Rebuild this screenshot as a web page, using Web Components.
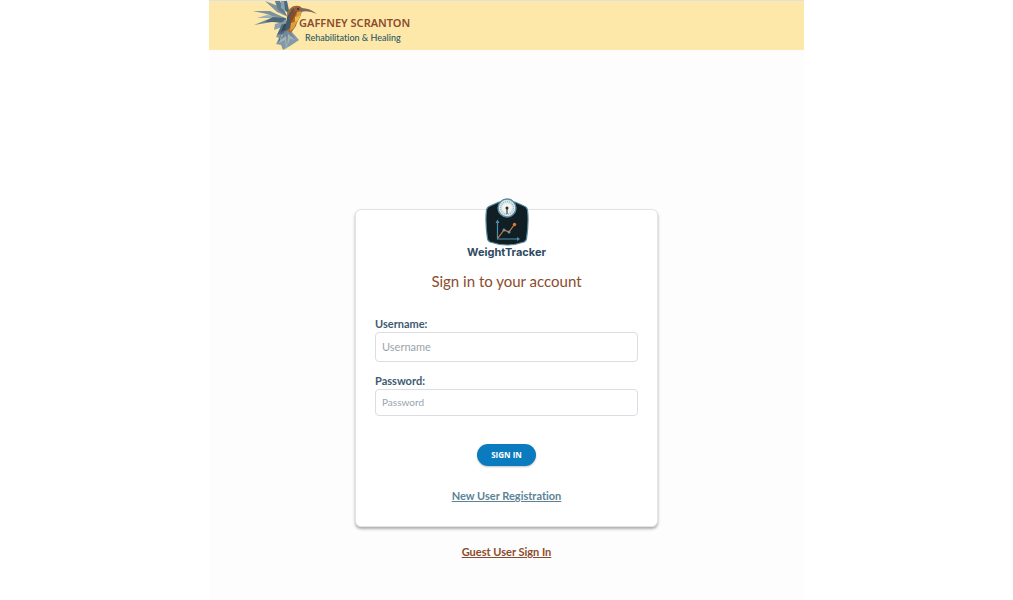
<!DOCTYPE html>
<html lang="en">
<head>
<meta charset="utf-8">
<meta name="viewport" content="width=device-width, initial-scale=1">
<title>WeightTracker - Sign in</title>
<style>
  body { margin: 0; background: #fff; font-family: Lato, "Open Sans", sans-serif; }
</style>
</head>
<body>
<weight-app>
  <brand-header slot="header"></brand-header>
  <sign-in-card>
    <tracker-logo slot="logo"></tracker-logo>
    <form-field label="Username:" placeholder="Username" name="username" type="text"></form-field>
    <form-field label="Password:" placeholder="Password" name="password" type="password" compact></form-field>
    <pill-button slot="action">SIGN IN</pill-button>
    <text-link slot="footer" href="#register">New User Registration</text-link>
  </sign-in-card>
  <text-link class="guest" slot="after" href="#guest" tone="brown">Guest User Sign In</text-link>
</weight-app>
<script>
const define = (name, html, setup) => {
  const template = document.createElement('template');
  template.innerHTML = html;
  customElements.define(name, class extends HTMLElement {
    constructor() {
      super();
      this.attachShadow({ mode: 'open' }).append(template.content.cloneNode(true));
    }
    connectedCallback() { if (setup) setup(this, this.shadowRoot); }
  });
};

define('weight-app', `
<style>
  :host { display: block; box-sizing: border-box; max-width: 595px; min-height: 100vh; margin: 0 auto; background: #fdfdfd; }
  main { display: flex; flex-direction: column; align-items: center; gap: 16px; padding: 159px 16px 32px; }
</style>
<slot name="header"></slot>
<main><slot></slot><slot name="after"></slot></main>`);

define('brand-header', `
<style>
  :host { display: block; }
  header { box-sizing: border-box; height: 50px; padding-left: 44px; display: flex; background: #fde8a9; border-top: 1px solid #e0e0de; }
  svg { flex: none; width: 66px; height: 49px; }
  .name { display: flex; flex-direction: column; margin-left: -20px; padding-top: 14px; white-space: nowrap; }
  .top { font: 600 11px/16px "Noto Sans", sans-serif; color: #8c4b2c; }
  .sub { font: 500 9px/13px Lato, sans-serif; font-variant-ligatures: none; color: #2b5963; padding-left: 6px; }
</style>
<header>
  <svg viewBox="0 1 66 49" aria-hidden="true">
    <path d="M35 17 30 12 25 6 12 1 24 12Z" fill="#8296a2"/>
    <path d="M34 16 27 1 22 1 25 10Z" fill="#627d8c"/>
    <path d="M35 13 32 1 28 1 28 8Z" fill="#8ba1ac"/>
    <path d="M37 15 34 1 31 1 32 10Z" fill="#4d6a7c"/>
    <path d="M32 18 17 11 0 11 14 14 29 21Z" fill="#7c929d"/>
    <path d="M30 18 14 15 4 18 20 18 29 22Z" fill="#9aafb6"/>
    <path d="M31 20 18 18 1 25 19 22 30 23Z" fill="#70899a"/>
    <path d="M33 18 20 17 12 22 24 22 32 24Z" fill="#4d6778"/>
    <path d="M30 22 22 24 21 30 29 27Z" fill="#8ba0a9"/>
    <path d="M31 20 23 37 26 38 23 44 28 45 30 50 37 46 46 40 38 31 41 23Z" fill="#8299a8"/>
    <path d="M29 24 24 35 28 34 25 42 32 38 38 28Z" fill="#4e687d"/>
    <path d="m28 35-2 8 6-3 1 9 4-10 7 1-9-9Z" fill="#a5b1b7"/>
    <path d="m32 31-5 9 6-4 1 11 1-13 9 7-8-11Z" fill="#728998"/>
    <path d="m31 24-3 8 4-2 5-7Z" fill="#304a60"/>
    <path d="M34 14C36 8 40 5 45 6c4 0 5 4 3 8-1 5-4 7-5 12l-5 7-5-3 2-9Z" fill="#ad682e"/>
    <path d="m34 17 6-9 4 2-5 8-2 10-5 3Z" fill="#435b67"/>
    <path d="m37 15 6-7 2 2-5 9-3 6Z" fill="#8d492b"/>
    <path d="m42 17 6-4-2 6-4 5Z" fill="#ecbf46"/>
    <path d="m38 23 6-2-3 7-4 3Z" fill="#dc9d3e"/>
    <path d="M42 7c3-2 7 0 8 3l-4 2-5-1Z" fill="#9c5a36"/>
    <path d="m44 12 5-1-2 4-4 3Z" fill="#d99c36"/>
    <path d="M46 8Q56 7 64 14Q55 10 48 12Z" fill="#806a57"/>
    <circle cx="45" cy="9" r="1" fill="#22303a"/>
  </svg>
  <div class="name"><span class="top">GAFFNEY SCRANTON</span><span class="sub">Rehabilitation &amp; Healing</span></div>
</header>`);

define('tracker-logo', `
<style>
  :host { display: flex; flex-direction: column; align-items: center; }
  svg { display: block; width: 44px; height: 48px; }
  span { font: 700 11px/12px Inter, sans-serif; color: #2e4a62; white-space: nowrap; }
</style>
<svg viewBox="0 0 44 48" aria-hidden="true">
  <path d="M14 4 5 8Q2 9 1.500 12Q0 24 2.500 41Q3 43 5 44Q22 50 39 44Q41 43 41.500 41Q44 24 42.500 12Q42 9 39 8L30 4Z" fill="#111f25" stroke="#568ba1" stroke-width="1.200"/>
  <circle cx="22" cy="10" r="9" fill="#dbe6e8" stroke="#568ba1" stroke-width="1.400"/>
  <circle cx="22" cy="10" r="6.500" fill="none" stroke="#8fa8b3" stroke-width="1.300" stroke-dasharray=".7 1.300"/>
  <circle cx="22" cy="10" r="4.800" fill="#f4f4ee"/>
  <path d="M22 9v7" stroke="#39464a" stroke-width="1.200"/>
  <circle cx="22" cy="10" r="1.500" fill="#25313a"/>
  <path d="M12.500 24v17H33" fill="none" stroke="#4d91ad" stroke-width="1.200"/>
  <path d="m10.500 25 2-3.500 2 3.500ZM32 39l3 2-3 2Z" fill="#4d91ad"/>
  <path d="m13 40 6-8 5 2 5-7" fill="none" stroke="#d27b3c" stroke-width="1.200"/>
  <g fill="#6b98aa"><circle cx="19" cy="32" r="1.500"/><circle cx="24" cy="34" r="1.500"/></g>
  <circle cx="29.500" cy="26.500" r="1.700" fill="#dc7a35"/>
</svg>
<span>WeightTracker</span>`);

define('sign-in-card', `
<style>
  :host { display: block; width: 100%; max-width: 303px; }
  form { box-sizing: border-box; margin: 0; padding: 0 19px 21px; display: flex; flex-direction: column; background: #fff; border: 1px solid #e2e3e7; border-radius: 6px; box-shadow: 0 2px 3px rgba(0,0,0,.32); }
  .logo { display: flex; justify-content: center; margin-top: -12px; }
  h1 { margin: 13px 0 25px; font: 400 15px/20px Lato, sans-serif; color: #8c4b2c; text-align: center; }
  .fields { display: grid; gap: 11px; }
  .action { display: flex; justify-content: center; padding: 28px 0 21px; }
  .footer { display: flex; justify-content: center; }
</style>
<form onsubmit="return false">
  <div class="logo"><slot name="logo"></slot></div>
  <h1>Sign in to your account</h1>
  <div class="fields"><slot></slot></div>
  <div class="action"><slot name="action"></slot></div>
  <div class="footer"><slot name="footer"></slot></div>
</form>`);

define('form-field', `
<style>
  :host { display: flex; flex-direction: column; }
  label { font: 700 11px/16px Lato, sans-serif; color: #3d5b72; }
  input { box-sizing: border-box; width: 100%; height: 30px; margin: 0; padding: 0 6px 2px; border: 1px solid #dadde3; border-radius: 4px; background: #fff; color: #3d5b72; outline-offset: 1px; font: 400 11px Lato, sans-serif; }
  input::placeholder { color: #9aa3ab; opacity: 1; }
  :host([compact]) input { height: 27px; font-size: 10px; }
</style>
<label for="field"></label><input id="field">`, (host, root) => {
  root.querySelector('label').textContent = host.getAttribute('label');
  const input = root.querySelector('input');
  for (const key of ['placeholder', 'name', 'type']) input.setAttribute(key, host.getAttribute(key));
});

define('pill-button', `
<style>
  :host { display: block; }
  button { display: block; height: 22px; margin: 0; padding: 0 14px; border: 0; border-radius: 11px; background: #0a7bbe; color: #fff; font: 700 8px/22px "Open Sans", sans-serif; box-shadow: 0 1px 2px rgba(0,0,0,.24); cursor: pointer; }
</style>
<button type="button"><slot></slot></button>`);

define('text-link', `
<style>
  :host { display: block; font-size: 11px; line-height: 18px; }
  a { display: block; color: #5d8396; font: 700 11px/18px Lato, sans-serif; font-variant-ligatures: none; text-decoration: underline; white-space: nowrap; }
  :host([tone="brown"]) a { color: #8c4b2c; }
</style>
<a><slot></slot></a>`, (host, root) => {
  root.querySelector('a').href = host.getAttribute('href');
});
</script>
</body>
</html>
